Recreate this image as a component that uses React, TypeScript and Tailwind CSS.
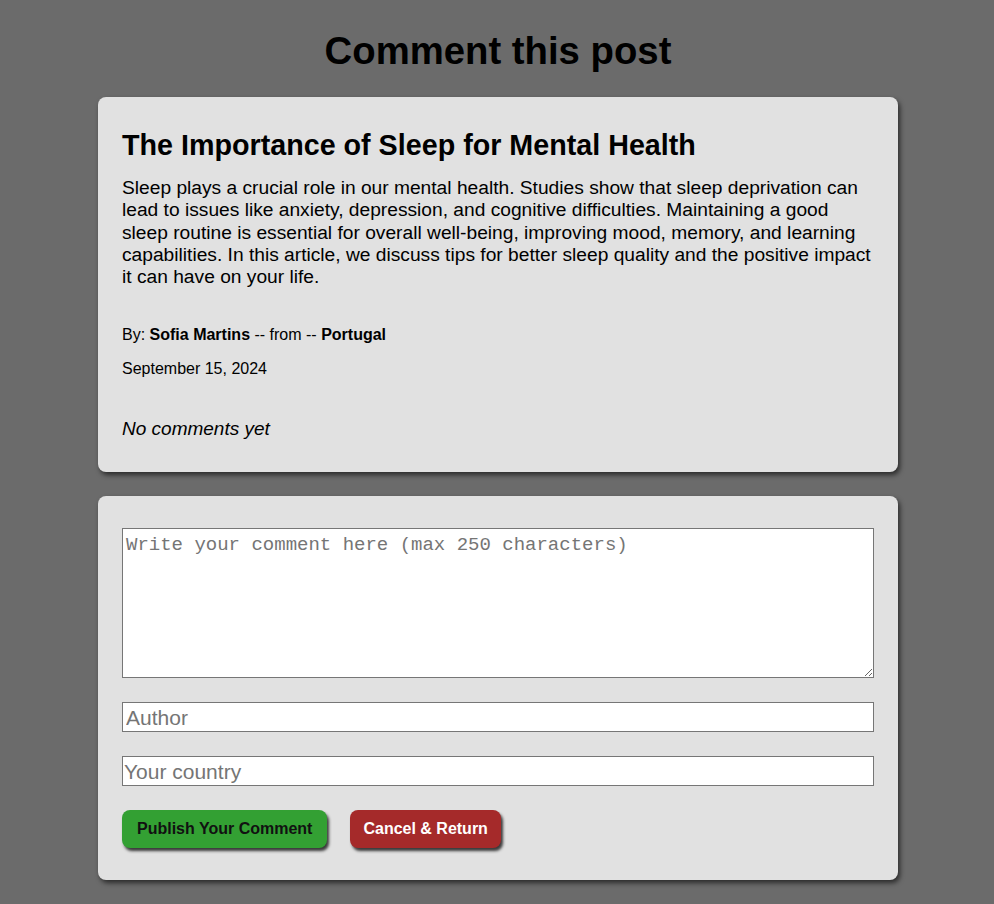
import React from 'react';

const App = () => {
  return (
    <div className="min-h-screen bg-[#6b6b6b] font-['Liberation_Sans',Arial,sans-serif] text-black pt-[29px] pb-10 pl-[2px]">
      <h1 className="text-center text-[38.3px] font-bold leading-[43px] mb-[25px]">Comment this post</h1>

      {/* Post card */}
      <div className="w-[800px] mx-auto bg-[#e1e1e1] rounded-lg shadow-[2px_3px_5px_rgba(0,0,0,0.6)] px-6 pt-8 pb-8">
        <h2 className="text-[28.7px] font-bold leading-[32px]">The Importance of Sleep for Mental Health</h2>
        <p className="mt-4 text-[19.2px] leading-[22.25px]">
          Sleep plays a crucial role in our mental health. Studies show that sleep deprivation can lead to issues like anxiety, depression, and cognitive difficulties. Maintaining a good sleep routine is essential for overall well-being, improving mood, memory, and learning capabilities. In this article, we discuss tips for better sleep quality and the positive impact it can have on your life.
        </p>
        <p className="mt-[38px] text-[16px] leading-[18px]">
          By: <b>Sofia Martins</b> -- from -- <b>Portugal</b>
        </p>
        <p className="mt-4 text-[16px] leading-[18px]">September 15, 2024</p>
        <p className="mt-[40px] text-[19px] leading-[22px] italic">No comments yet</p>
      </div>

      {/* Comment form */}
      <div className="w-[800px] mx-auto mt-6 bg-[#e1e1e1] rounded-lg shadow-[2px_3px_5px_rgba(0,0,0,0.6)] px-6 py-8">
        <textarea
          placeholder="Write your comment here (max 250 characters)"
          className="block w-full h-[150px] bg-white border border-[#767676] px-[3px] pt-[5px] pb-[1px] font-['Liberation_Mono',monospace] text-[19px] leading-[22px] placeholder:text-[#757575]"
        />
        <input
          placeholder="Author"
          className="block w-full h-[30px] mt-6 bg-white border border-[#767676] px-[3px] text-[21px] placeholder:text-[#757575]"
        />
        <input
          placeholder="Your country"
          className="block w-full h-[30px] mt-6 bg-white border border-[#767676] px-[1px] text-[21px] placeholder:text-[#757575]"
        />
        <div className="flex gap-[23px] mt-6">
          <button className="h-[38px] px-[15px] rounded-lg bg-[#33a033] text-[#111] text-[16px] font-bold shadow-[2px_3px_3px_rgba(0,0,0,0.75)]">
            Publish Your Comment
          </button>
          <button className="h-[38px] px-[13px] rounded-lg bg-[#a52a2a] text-white text-[16px] font-bold shadow-[2px_3px_3px_rgba(0,0,0,0.75)]">
            Cancel &amp; Return
          </button>
        </div>
      </div>
    </div>
  );
};

export default App;
